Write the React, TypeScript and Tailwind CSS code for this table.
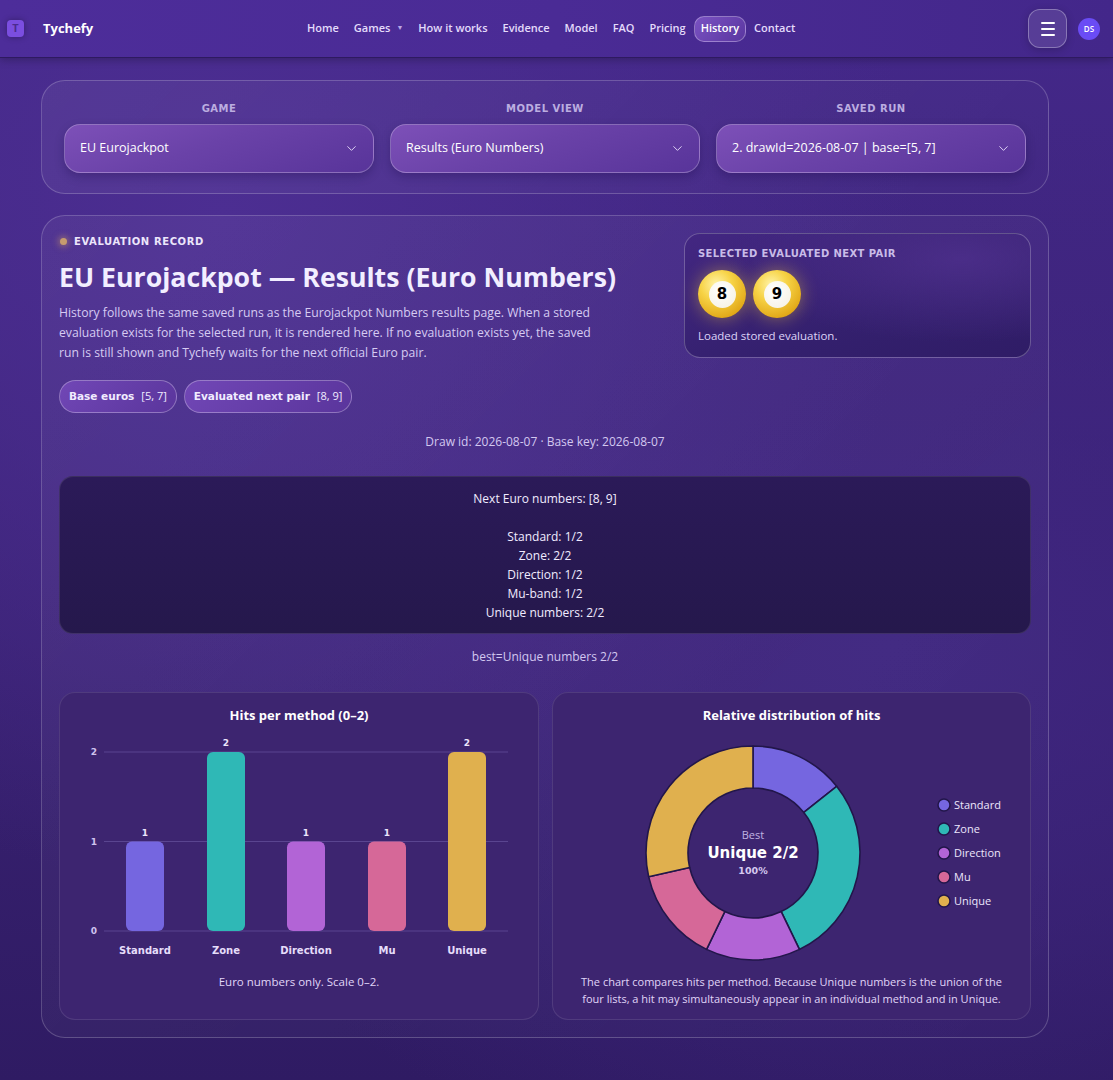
import React from "react";
import { ChevronDown } from "lucide-react";

const COLORS = {
  Standard: "#7566e0",
  Zone: "#2fb8b6",
  Direction: "#b264d6",
  Mu: "#d66898",
  Unique: "#e0b04e",
};

const DATA: { name: keyof typeof COLORS; v: number }[] = [
  { name: "Standard", v: 1 },
  { name: "Zone", v: 2 },
  { name: "Direction", v: 1 },
  { name: "Mu", v: 1 },
  { name: "Unique", v: 2 },
];

const HEAVY = { fontFamily: '"DejaVu Sans", Verdana, sans-serif' };

function Header() {
  const items = ["Home", "Games", "How it works", "Evidence", "Model", "FAQ", "Pricing", "History", "Contact"];
  return (
    <header className="h-[58px] flex items-center bg-[linear-gradient(90deg,#4d2d9a_0%,#4a2b95_50%,#43278a_100%)] border-b border-[#2e1a60] shadow-[0_2px_8px_rgba(0,0,0,0.25)]">
      <div className="flex items-center pl-[7px] w-[300px]">
        <div className="w-[17px] h-[17px] rounded-[4px] bg-[#7b4ee0] flex items-center justify-center text-[11px] font-bold text-[#4b2a90] shadow-[0_0_6px_rgba(0,0,0,0.3)]">
          T
        </div>
        <span className="ml-[19px] text-[13px] font-bold text-white">Tychefy</span>
      </div>
      <nav className="flex items-center gap-[1px] ml-[0px]">
        {items.map((it) =>
          it === "History" ? (
            <span
              key={it}
              className="px-[6px] h-[26px] flex items-center rounded-[10px] border border-white/30 bg-[linear-gradient(135deg,#7a52c2,#5a36a0)] text-[11px] font-semibold text-white"
            >
              {it}
            </span>
          ) : (
            <span key={it} className="px-[7px] text-[11px] font-semibold text-[#e4dcfb] flex items-center">
              {it}
              {it === "Games" && <span className="ml-[6px] text-[7px] text-[#b9a8e6]">▼</span>}
            </span>
          )
        )}
      </nav>
      <div className="ml-auto flex items-center gap-[11px] pr-[13px]">
        <div className="w-[39px] h-[39px] rounded-[12px] border border-white/30 bg-white/10 flex flex-col items-center justify-center gap-[4px] shadow-[0_2px_8px_rgba(0,0,0,0.2)]">
          <span className="block w-[14px] h-[2px] bg-white rounded" />
          <span className="block w-[14px] h-[2px] bg-white rounded" />
          <span className="block w-[14px] h-[2px] bg-white rounded" />
        </div>
        <div className="w-[22px] h-[22px] rounded-full bg-[#6a4cf5] flex items-center justify-center text-[8px] text-white font-semibold">
          DS
        </div>
      </div>
    </header>
  );
}

function SelectBox({ label, value }: { label: string; value: string }) {
  return (
    <div className="flex flex-col items-center">
      <div className="text-[10px] font-bold tracking-[0.05em] text-[#bcaee0] leading-[14px]" style={HEAVY}>
        {label}
      </div>
      <div className="mt-[8px] w-full h-[49px] rounded-[16px] border border-white/25 bg-[linear-gradient(160deg,#7d50b8_0%,#6a42a8_45%,#58349a_100%)] flex items-center justify-between pl-[15px] pr-[14px] shadow-[0_4px_10px_rgba(20,5,60,0.25)]">
        <span className="text-[12.5px] text-white">{value}</span>
        <ChevronDown size={15} strokeWidth={1.5} className="text-[#e6dcfa]" />
      </div>
    </div>
  );
}

function Ball({ n }: { n: number }) {
  return (
    <div className="w-[48px] h-[48px] rounded-full bg-[radial-gradient(circle_at_38%_30%,#fff3a8_0%,#f7d346_35%,#e2a919_75%,#c88a0c_100%)] shadow-[0_0_18px_rgba(245,200,60,0.45)] flex items-center justify-center">
      <div className="w-[27px] h-[27px] rounded-full bg-[radial-gradient(circle_at_40%_35%,#ffffff,#f4efe0)] flex items-center justify-center text-[15px] font-bold text-black" style={HEAVY}>
        {n}
      </div>
    </div>
  );
}

function BarChart() {
  const yFor = (v: number) => 208 - v * 89.5;
  const centers = [85, 166, 246, 327, 407];
  return (
    <svg width="478" height="240" viewBox="0 0 478 240">
      {[0, 1, 2].map((v) => (
        <g key={v}>
          <line x1="44" x2="448" y1={yFor(v)} y2={yFor(v)} stroke="#5a4590" strokeWidth="1" />
          <text x="37" y={yFor(v) + 3} textAnchor="end" fontSize="9" fontWeight="bold" fill="#cfc3ee" style={HEAVY}>
            {v}
          </text>
        </g>
      ))}
      {DATA.map((d, i) => {
        const top = yFor(d.v);
        return (
          <g key={d.name}>
            <rect x={centers[i] - 19} y={top} width="38" height={208 - top} rx="6" fill={COLORS[d.name]} />
            <text x={centers[i]} y={top - 6} textAnchor="middle" fontSize="9" fontWeight="bold" fill="#ece6fb" style={HEAVY}>
              {d.v}
            </text>
            <text x={centers[i]} y="231" textAnchor="middle" fontSize="10" fontWeight="bold" fill="#e6ddfa" style={HEAVY}>
              {d.name}
            </text>
          </g>
        );
      })}
    </svg>
  );
}

function arcPath(cx: number, cy: number, R: number, r: number, a0: number, a1: number) {
  const rad = (a: number) => (a * Math.PI) / 180;
  const p = (rr: number, a: number) => [cx + rr * Math.sin(rad(a)), cy - rr * Math.cos(rad(a))];
  const [x0, y0] = p(R, a0);
  const [x1, y1] = p(R, a1);
  const [x2, y2] = p(r, a1);
  const [x3, y3] = p(r, a0);
  const large = a1 - a0 > 180 ? 1 : 0;
  return `M${x0} ${y0} A${R} ${R} 0 ${large} 1 ${x1} ${y1} L${x2} ${y2} A${r} ${r} 0 ${large} 0 ${x3} ${y3} Z`;
}

function Donut() {
  const total = DATA.reduce((s, d) => s + d.v, 0);
  let acc = 0;
  const cx = 200;
  const cy = 130;
  return (
    <svg width="478" height="240" viewBox="0 0 478 240">
      {DATA.map((d) => {
        const a0 = (acc / total) * 360;
        acc += d.v;
        const a1 = (acc / total) * 360;
        return <path key={d.name} d={arcPath(cx, cy, 107, 65, a0, a1)} fill={COLORS[d.name]} stroke="#22164a" strokeWidth="1.6" strokeLinejoin="round" />;
      })}
      <text x={cx} y={cy - 14} textAnchor="middle" fontSize="11" fill="#c0b3e2" style={{ fontFamily: '"Open Sans", sans-serif' }}>
        Best
      </text>
      <text x={cx} y={cy + 5} textAnchor="middle" fontSize="15" fontWeight="bold" fill="#ffffff" style={HEAVY}>
        Unique 2/2
      </text>
      <text x={cx} y={cy + 21} textAnchor="middle" fontSize="9.5" fontWeight="bold" fill="#d5caf0" style={HEAVY}>
        100%
      </text>
      {DATA.map((d, i) => (
        <g key={d.name}>
          <circle cx="391" cy={82 + i * 24} r="6" fill={COLORS[d.name]} stroke="#22164a" strokeWidth="1.5" />
          <text x="401" y={86 + i * 24} fontSize="11" fill="#ece5fc" style={{ fontFamily: '"Open Sans", sans-serif' }}>
            {d.name}
          </text>
        </g>
      ))}
    </svg>
  );
}

export default function App() {
  return (
    <div
      className="min-h-screen bg-[radial-gradient(ellipse_at_20%_20%,#4c2e92_0%,transparent_55%),radial-gradient(ellipse_at_80%_60%,#3f2680_0%,transparent_60%),linear-gradient(180deg,#44288a_0%,#3a2274_55%,#2f1b63_100%)] text-white"
      style={{ fontFamily: '"Open Sans", "Noto Sans", sans-serif' }}
    >
      <Header />
      <main className="ml-[41px] w-[1008px] pt-[22px] pb-[43px]">
        {/* Filters */}
        <section className="rounded-[24px] border border-white/20 bg-[linear-gradient(135deg,rgba(255,255,255,0.06),rgba(255,255,255,0.01))] px-[22px] pt-[21px] pb-[20px] grid grid-cols-3 gap-[16px]">
          <SelectBox label="GAME" value="EU Eurojackpot" />
          <SelectBox label="MODEL VIEW" value="Results (Euro Numbers)" />
          <SelectBox label="SAVED RUN" value="2. drawId=2026-08-07 | base=[5, 7]" />
        </section>

        {/* Main card */}
        <section className="mt-[21px] rounded-[24px] border border-white/20 bg-[linear-gradient(135deg,rgba(255,255,255,0.05),rgba(255,255,255,0.01))] px-[17px] pt-[16px] pb-[17px]">
          <div className="flex justify-between">
            <div className="flex-1 min-w-0">
              <div className="flex items-center h-[14px] mt-[2px]">
                <span className="w-[7px] h-[7px] rounded-full bg-[#c79c6e] shadow-[0_0_6px_2px_rgba(200,150,100,0.5)] ml-[1px]" />
                <span className="ml-[7px] text-[10px] font-bold tracking-[0.06em] text-[#ece6fb]" style={HEAVY}>
                  EVALUATION RECORD
                </span>
              </div>
              <h1 className="mt-[12px] whitespace-nowrap text-[26.7px] leading-[34px] font-bold text-[#f2eeff]">EU Eurojackpot — Results (Euro Numbers)</h1>
              <p className="mt-[9px] w-[548px] text-[12.2px] leading-[20px] text-[#d6cbf2]">
                History follows the same saved runs as the Eurojackpot Numbers results page. When a stored evaluation exists for the selected run, it is rendered here. If no evaluation exists yet, the saved run is still shown and Tychefy waits for the next official Euro pair.
              </p>
              <div className="mt-[17px] flex gap-[7px]">
                <span className="h-[33px] px-[9px] rounded-full border border-white/30 bg-[linear-gradient(135deg,#7147b6,#5a359c)] flex items-center text-[10.5px] text-[#f1ecff]">
                  <b className="font-bold" style={HEAVY}>Base euros</b>
                  <span className="ml-[7px] text-[11px]">[5, 7]</span>
                </span>
                <span className="h-[33px] px-[9px] rounded-full border border-white/30 bg-[linear-gradient(135deg,#7147b6,#5a359c)] flex items-center text-[10.5px] text-[#f1ecff]">
                  <b className="font-bold" style={HEAVY}>Evaluated next pair</b>
                  <span className="ml-[7px] text-[11px]">[8, 9]</span>
                </span>
              </div>
            </div>
            <div className="shrink-0 mt-[1px] w-[347px] h-[125px] rounded-[16px] border border-white/25 bg-[radial-gradient(ellipse_at_80%_20%,#4a2d88_0%,transparent_60%),linear-gradient(160deg,#432782_0%,#34206e_60%,#2f1c66_100%)] px-[13px] pt-[13px]">
              <div className="text-[10px] font-bold tracking-[0.04em] text-[#c9bce8] leading-[14px]" style={HEAVY}>
                SELECTED EVALUATED NEXT PAIR
              </div>
              <div className="mt-[9px] flex gap-[7px]">
                <Ball n={8} />
                <Ball n={9} />
              </div>
              <div className="mt-[9px] text-[11.5px] text-[#ddd3f6]">Loaded stored evaluation.</div>
            </div>
          </div>

          <div className="mt-[21px] text-center text-[12px] leading-[16px] text-[#d3c8f0]">Draw id: 2026-08-07 · Base key: 2026-08-07</div>

          <div className="mt-[26px] h-[158px] rounded-[14px] border border-white/10 bg-[linear-gradient(180deg,#2b1a58,#25184c)] pt-[12px] text-center text-[12px] leading-[19px] text-[#f1ecff] whitespace-pre-line">
            {"Next Euro numbers: [8, 9]\n\nStandard: 1/2\nZone: 2/2\nDirection: 1/2\nMu-band: 1/2\nUnique numbers: 2/2"}
          </div>

          <div className="mt-[14px] text-center text-[12px] leading-[18px] text-[#d3c8f0]">best=Unique numbers 2/2</div>

          <div className="mt-[26px] grid grid-cols-[480px_479px] gap-[13px]">
            <div className="h-[328px] rounded-[16px] border border-white/10 bg-[#3d2570] pt-[14px] flex flex-col items-center">
              <div className="text-[13px] leading-[16px] font-bold text-white">Hits per method (0–2)</div>
              <BarChart />
              <div className="mt-[11px] text-[11.5px] leading-[16px] text-[#e0d6f8]">Euro numbers only. Scale 0–2.</div>
            </div>
            <div className="h-[328px] rounded-[16px] border border-white/10 bg-[#3d2570] pt-[14px] flex flex-col items-center">
              <div className="text-[13px] leading-[16px] font-bold text-white">Relative distribution of hits</div>
              <Donut />
              <div className="mt-[10px] px-[20px] text-center text-[11px] leading-[17px] text-[#e0d6f8]">
                The chart compares hits per method. Because Unique numbers is the union of the four lists, a hit may simultaneously appear in an individual method and in Unique.
              </div>
            </div>
          </div>
        </section>
      </main>
    </div>
  );
}
